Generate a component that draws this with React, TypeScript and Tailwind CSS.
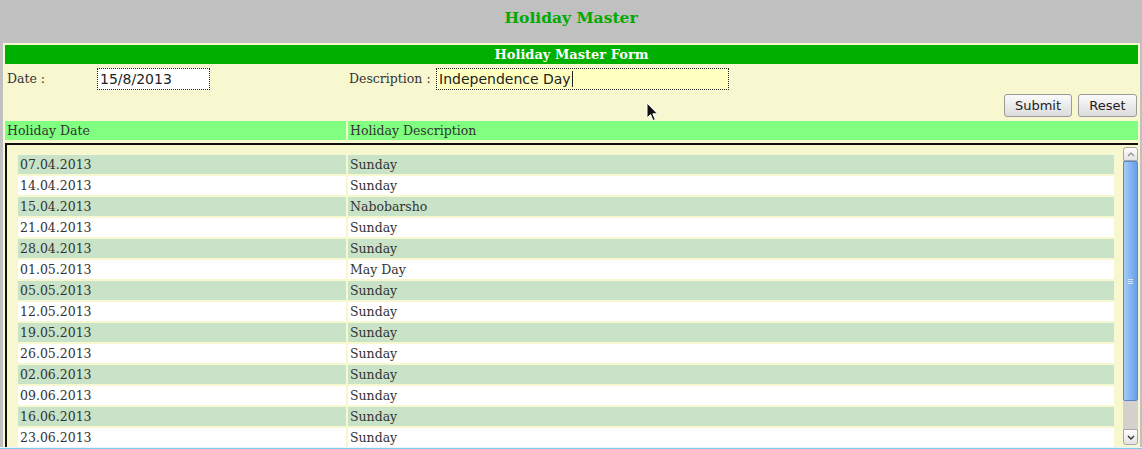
import React from "react";

const serif = "font-['DejaVu_Serif','Liberation_Serif',serif]";
const sans = "font-['DejaVu_Sans','Liberation_Sans',sans-serif]";

type Holiday = { date: string; description: string };

const holidays: Holiday[] = [
  { date: "07.04.2013", description: "Sunday" },
  { date: "14.04.2013", description: "Sunday" },
  { date: "15.04.2013", description: "Nabobarsho" },
  { date: "21.04.2013", description: "Sunday" },
  { date: "28.04.2013", description: "Sunday" },
  { date: "01.05.2013", description: "May Day" },
  { date: "05.05.2013", description: "Sunday" },
  { date: "12.05.2013", description: "Sunday" },
  { date: "19.05.2013", description: "Sunday" },
  { date: "26.05.2013", description: "Sunday" },
  { date: "02.06.2013", description: "Sunday" },
  { date: "09.06.2013", description: "Sunday" },
  { date: "16.06.2013", description: "Sunday" },
  { date: "23.06.2013", description: "Sunday" },
];

function Scrollbar() {
  return (
    <div className="flex h-full w-[15px] flex-col">
      <div className="flex h-[14px] items-center justify-center rounded-t-[3px] border border-[#a8a8a8] bg-gradient-to-b from-[#fdfdfd] to-[#e4e4e4]">
        <svg width="8" height="5" viewBox="0 0 8 5">
          <path d="M1 4 L4 1 L7 4" fill="none" stroke="#8a8a8a" strokeWidth="1.2" />
        </svg>
      </div>
      <div className="flex flex-1 flex-col bg-[#d4d0cc]">
        <div className="flex h-[240px] items-center justify-center rounded-[2px] border border-[#5b86c6] bg-gradient-to-r from-[#a8ccf8] via-[#84b4f2] to-[#6a9fe6]">
          <div className="flex flex-col gap-[1px]">
            <div className="h-px w-[5px] bg-[#d6e6fb]" />
            <div className="h-px w-[5px] bg-[#d6e6fb]" />
            <div className="h-px w-[5px] bg-[#d6e6fb]" />
          </div>
        </div>
      </div>
      <div className="flex h-[16px] items-center justify-center rounded-b-[3px] border border-[#a8a8a8] bg-gradient-to-b from-[#fdfdfd] to-[#e4e4e4]">
        <svg width="8" height="5" viewBox="0 0 8 5">
          <path d="M1 1 L4 4 L7 1" fill="none" stroke="#333" strokeWidth="1.4" />
        </svg>
      </div>
    </div>
  );
}

function Button({ label, width }: { label: string; width: string }) {
  return (
    <button
      type="button"
      className={`${sans} ${width} h-[23px] rounded-[3px] border border-[#9a9a9a] bg-gradient-to-b from-[#fbfbfb] to-[#dcdcdc] text-[13px] text-[#222]`}
    >
      {label}
    </button>
  );
}

export default function App() {
  return (
    <div className="relative flex h-[449px] w-[1142px] flex-col overflow-hidden bg-[#c0c0c0]">
      <div className="flex h-[43px] justify-center pt-[9px]">
        <h1 className={`${serif} text-[15.5px] leading-[18px] font-bold text-[#00aa00]`}>
          Holiday Master
        </h1>
      </div>

      <div className="ml-[3px] flex w-[1137px] flex-1 flex-col overflow-hidden bg-[#f8f8d0] px-[2px] pt-[2px]">
        <div
          className={`${serif} flex h-[19px] items-center justify-center bg-[#00b000] text-[13px] font-bold text-white`}
        >
          Holiday Master Form
        </div>

        <div className={`${serif} flex h-[57px] flex-col text-[12.5px] text-[#333]`}>
          <div className="flex h-[30px] items-center">
            <span className="ml-[2px] w-[90px]">Date :</span>
            <div
              className={`${sans} flex h-[22px] w-[113px] items-center border border-dotted border-[#222] bg-white px-[2px] text-[14px] text-[#222]`}
            >
              15/8/2013
            </div>
            <span className="ml-[139px] w-[87px]">Description :</span>
            <div
              className={`${sans} flex h-[22px] w-[293px] items-center border border-dotted border-[#222] bg-[#ffffc0] px-[2px] text-[14px] text-[#222]`}
            >
              Independence Day
              <span className="ml-[1px] h-[16px] w-px bg-[#222]" />
            </div>
          </div>
          <div className="flex justify-end gap-[6px] pr-[1px]">
            <Button label="Submit" width="w-[68px]" />
            <Button label="Reset" width="w-[59px]" />
          </div>
        </div>

        <div className={`${serif} flex h-[19px] gap-[2px] text-[12.5px] text-[#333]`}>
          <div className="flex w-[341px] items-center bg-[#80ff80] px-[2px] pt-[2px]">Holiday Date</div>
          <div className="flex flex-1 items-center bg-[#80ff80] px-[2px] pt-[2px]">Holiday Description</div>
        </div>

        <div className="mt-[3px] flex min-h-0 flex-1 border-t-2 border-l-2 border-[#111] pt-[2px]">
          <div className="flex min-w-0 flex-1 flex-col gap-[2px] overflow-hidden pt-[8px] pl-[11px]">
            {holidays.map((h, i) => {
              const bg = i % 2 === 0 ? "bg-[#c9e3c8]" : "bg-white";
              return (
                <div
                  key={h.date}
                  className={`${serif} flex h-[19px] shrink-0 gap-[2px] text-[12.5px] text-[#333]`}
                >
                  <div className={`flex w-[328px] items-center px-[2px] pt-[2px] ${bg}`}>{h.date}</div>
                  <div className={`flex w-[766px] items-center px-[2px] pt-[2px] ${bg}`}>{h.description}</div>
                </div>
              );
            })}
          </div>
          <div className="ml-[9px] pb-[2px]">
            <Scrollbar />
          </div>
        </div>
      </div>
      <div className="h-[2px] w-full border-t border-[#e8f4fb] bg-[#7fcbef]" />

      <svg
        className="absolute top-[102px] left-[646px]"
        width="13"
        height="20"
        viewBox="0 0 13 20"
      >
        <path
          d="M1 1 L1 16 L4.5 12.5 L7 18.5 L9.3 17.5 L6.8 11.8 L11.5 11.8 Z"
          fill="#111"
          stroke="#fff"
          strokeWidth="1"
        />
      </svg>
    </div>
  );
}
